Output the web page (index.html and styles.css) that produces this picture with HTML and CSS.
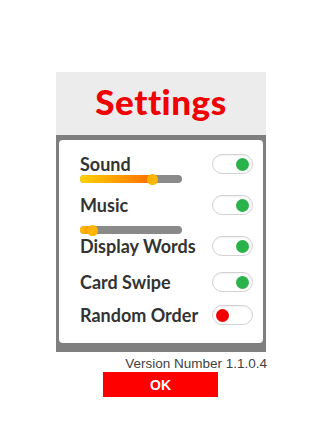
FILE: index.html
```html
<!DOCTYPE html>
<html lang="en">
<head>
<meta charset="utf-8">
<title>Settings</title>
<link rel="stylesheet" href="styles.css">
</head>
<body>
<div class="panel">
  <div class="header"><h1 class="title">Settings</h1></div>
  <div class="frame">
    <div class="card">
      <div class="setting s-sound">
        <div class="row"><span class="label">Sound</span><span class="toggle on"><span class="knob"></span></span></div>
        <div class="slider"><div class="fill" style="width:72px"></div><span class="thumb"></span></div>
      </div>
      <div class="setting s-music">
        <div class="row"><span class="label">Music</span><span class="toggle on"><span class="knob"></span></span></div>
        <div class="slider"><div class="fill" style="width:12px"></div><span class="thumb"></span></div>
      </div>
      <div class="setting s-display">
        <div class="row"><span class="label">Display Words</span><span class="toggle on"><span class="knob"></span></span></div>
      </div>
      <div class="setting s-swipe">
        <div class="row"><span class="label">Card Swipe</span><span class="toggle on"><span class="knob"></span></span></div>
      </div>
      <div class="setting s-random">
        <div class="row"><span class="label">Random Order</span><span class="toggle off"><span class="knob"></span></span></div>
      </div>
    </div>
  </div>
  <div class="version">Version Number 1.1.0.4</div>
  <div class="actions"><button class="ok">OK</button></div>
</div>
</body>
</html>
```
FILE: styles.css
```css
html, body {
  margin: 0;
  padding: 0;
  background: #ffffff;
}
body {
  width: 322px;
  height: 430px;
  overflow: hidden;
}
.panel {
  margin: 72px 0 0 56px;
  width: 210px;
}
.header {
  height: 63px;
  background: #ececec;
  display: flex;
  align-items: center;
  justify-content: center;
}
.title {
  margin: 0;
  font-family: "Lato", "DejaVu Sans", sans-serif;
  font-weight: 900;
  font-size: 35px;
  color: #f00000;
  letter-spacing: 0.5px;
  padding-bottom: 6px;
}
.frame {
  background: #7f7f7f;
  padding: 5px 3px 9px 3px;
}
.card {
  background: #ffffff;
  border-radius: 4px;
  height: 203px;
  box-sizing: border-box;
  padding: 14px 10px 0 21px;
  display: flex;
  flex-direction: column;
}
.row {
  display: flex;
  align-items: center;
  justify-content: space-between;
  height: 20px;
}
.label {
  font-family: "Lato", "DejaVu Sans", sans-serif;
  font-weight: 700;
  font-size: 18px;
  color: #333333;
  line-height: 20px;
}
.s-music { margin-top: 12px; }
.s-display { margin-top: 2px; }
.s-swipe { margin-top: 16px; }
.s-random { margin-top: 13px; }
.toggle {
  width: 41px;
  height: 20px;
  box-sizing: border-box;
  border: 1px solid #d2d2d2;
  border-radius: 10px;
  background: #ffffff;
  box-shadow: inset 0 1px 2px rgba(0,0,0,0.06);
  display: flex;
  align-items: center;
  padding: 0 3px;
}
.toggle.on { justify-content: flex-end; }
.toggle.off { justify-content: flex-start; }
.knob {
  width: 13px;
  height: 13px;
  border-radius: 50%;
}
.toggle.on .knob { background: #2bb34b; }
.toggle.off .knob { background: #f20000; }
.slider {
  position: relative;
  width: 102px;
  height: 8px;
  border-radius: 4px;
  background: #8a8a8a;
  margin-top: 1px;
  display: flex;
  align-items: center;
}
.s-music .slider { margin-top: 11px; }
.fill {
  height: 8px;
  border-radius: 4px 0 0 4px;
  background: linear-gradient(to right, #ffd200, #ff6e00);
}
.s-music .fill { background: linear-gradient(to right, #ffc000, #ff8c00); }
.thumb {
  width: 11px;
  height: 11px;
  border-radius: 50%;
  background: #ffb400;
  margin-left: -5px;
}
.version {
  margin-top: 4px;
  text-align: right;
  margin-right: -1px;
  font-family: "Liberation Sans", Arial, sans-serif;
  font-size: 13.5px;
  color: #3f3f3f;
  line-height: 15px;
}
.actions {
  margin-top: 1px;
  padding-left: 47px;
}
.ok {
  display: block;
  width: 115px;
  height: 25px;
  border: 0;
  background: #ff0000;
  color: #ffffff;
  font-family: "Liberation Sans", Arial, sans-serif;
  font-weight: 700;
  font-size: 14px;
  padding: 0;
}
```
